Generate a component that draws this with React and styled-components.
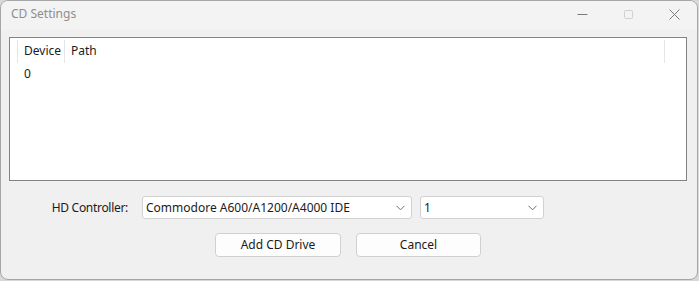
import React from "react";
import styled, { createGlobalStyle } from "styled-components";

const GlobalStyle = createGlobalStyle`
  html, body { margin: 0; padding: 0; }
  body {
    background: #d8d8d8;
    font-family: "Noto Sans", "Open Sans", sans-serif;
    font-size: 12px;
    color: #1b1b1b;
    width: 699px;
    height: 281px;
    overflow: hidden;
  }
`;

const Window = styled.div`
  box-sizing: border-box;
  width: 698px;
  height: 280px;
  border: 1px solid #a6a6a6;
  border-radius: 8px;
  background: #f0f0f0;
  overflow: hidden;
  display: flex;
  flex-direction: column;
`;

const TitleBar = styled.div`
  height: 29px;
  flex: none;
  display: flex;
  align-items: center;
  background: #f3f3f3;
`;

const Title = styled.div`
  flex: 1;
  padding-left: 10px;
  color: #8e8e8e;
  font-size: 12px;
  line-height: 16px;
  margin-top: -3px;
`;

const Caption = styled.div`
  width: 46px;
  height: 29px;
  display: flex;
  align-items: center;
  justify-content: center;
  margin-top: -3px;
`;

const Body = styled.div`
  flex: 1;
  padding: 7px 0 0 8px;
  display: flex;
  flex-direction: column;
`;

const ListView = styled.div`
  box-sizing: border-box;
  width: 678px;
  height: 144px;
  border: 1px solid #838383;
  background: #ffffff;
  padding-top: 2px;
`;

const Header = styled.div`
  display: flex;
  height: 23px;
  align-items: center;
`;

const HeaderCell = styled.div`
  box-sizing: border-box;
  width: ${(p) => p.$w}px;
  height: 23px;
  display: flex;
  align-items: center;
  padding-left: 6px;
  border-right: 1px solid #e5e5e5;
  line-height: 16px;
  padding-bottom: 2px;
`;

const Row = styled.div`
  display: flex;
  height: 20px;
  align-items: center;
  padding-left: 14px;
`;

const FormRow = styled.div`
  display: flex;
  align-items: center;
  margin-top: 15px;
  height: 23px;
`;

const Label = styled.div`
  width: 119px;
  text-align: right;
  margin-right: 14px;
  line-height: 16px;
  letter-spacing: -0.3px;
`;

const Select = styled.div`
  box-sizing: border-box;
  width: ${(p) => p.$w}px;
  height: 23px;
  border: 1px solid #d1d1d1;
  border-radius: 3px;
  background: #ffffff;
  display: flex;
  align-items: center;
  justify-content: space-between;
  padding: 0 6px 0 3px;
  margin-right: 8px;
  line-height: 16px;
`;

const ButtonRow = styled.div`
  display: flex;
  justify-content: center;
  gap: 15px;
  margin-top: 14px;
  padding-right: 10px;
`;

const Button = styled.div`
  box-sizing: border-box;
  width: ${(p) => p.$w}px;
  height: 24px;
  border: 1px solid #d0d0d0;
  border-radius: 4px;
  background: #fdfdfd;
  display: flex;
  align-items: center;
  justify-content: center;
  line-height: 16px;
`;

const Chevron = () => (
  <svg width="9" height="6" viewBox="0 0 9 6">
    <path d="M0.5 0.8 L4.5 4.8 L8.5 0.8" fill="none" stroke="#6e6e6e" strokeWidth="1" />
  </svg>
);

export default function App() {
  return (
    <>
      <GlobalStyle />
      <Window>
        <TitleBar>
          <Title>CD Settings</Title>
          <Caption>
            <svg width="11" height="11" viewBox="0 0 11 11">
              <path d="M0.5 5.5 H10.5" stroke="#7a7a7a" strokeWidth="1" />
            </svg>
          </Caption>
          <Caption>
            <svg width="11" height="11" viewBox="0 0 11 11">
              <rect x="1.5" y="1.5" width="8" height="8" rx="1" fill="none" stroke="#cfcfcf" strokeWidth="1" />
            </svg>
          </Caption>
          <Caption>
            <svg width="11" height="11" viewBox="0 0 11 11">
              <path d="M0.5 0.5 L10.5 10.5 M10.5 0.5 L0.5 10.5" stroke="#7a7a7a" strokeWidth="1" />
            </svg>
          </Caption>
        </TitleBar>
        <Body>
          <ListView>
            <Header>
              <HeaderCell $w={8} />
              <HeaderCell $w={47}>Device</HeaderCell>
              <HeaderCell $w={600}>Path</HeaderCell>
            </Header>
            <Row>0</Row>
          </ListView>
          <FormRow>
            <Label>HD Controller:</Label>
            <Select $w={270}>
              <span>Commodore A600/A1200/A4000 IDE</span>
              <Chevron />
            </Select>
            <Select $w={124}>
              <span>1</span>
              <Chevron />
            </Select>
          </FormRow>
          <ButtonRow>
            <Button $w={126}>Add CD Drive</Button>
            <Button $w={125}>Cancel</Button>
          </ButtonRow>
        </Body>
      </Window>
    </>
  );
}
